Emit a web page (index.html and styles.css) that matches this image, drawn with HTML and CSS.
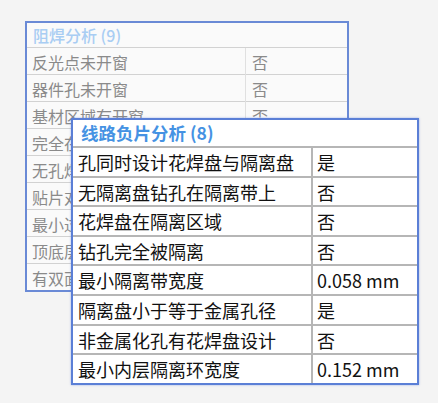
FILE: index.html
```html
<!DOCTYPE html>
<html lang="zh">
<head>
<meta charset="utf-8">
<link rel="stylesheet" href="styles.css">
</head>
<body>
<div class="stage">
  <div class="card back">
    <div class="head">阻焊分析 (9)</div>
    <div class="row"><div class="k">反光点未开窗</div><div class="v">否</div></div>
    <div class="row"><div class="k">器件孔未开窗</div><div class="v">否</div></div>
    <div class="row"><div class="k">基材区域有开窗</div><div class="v">否</div></div>
    <div class="row"><div class="k">完全在阻焊外</div><div class="v">否</div></div>
    <div class="row"><div class="k">无孔焊盘开窗</div><div class="v">否</div></div>
    <div class="row"><div class="k">贴片对应开窗</div><div class="v">否</div></div>
    <div class="row"><div class="k">最小过孔开窗</div><div class="v">否</div></div>
    <div class="row"><div class="k">顶底层开窗</div><div class="v">否</div></div>
    <div class="row"><div class="k">有双面开窗</div><div class="v">否</div></div>
  </div>
  <div class="card front">
    <div class="head">线路负片分析 (8)</div>
    <div class="row"><div class="k">孔同时设计花焊盘与隔离盘</div><div class="v">是</div></div>
    <div class="row"><div class="k">无隔离盘钻孔在隔离带上</div><div class="v">否</div></div>
    <div class="row"><div class="k">花焊盘在隔离区域</div><div class="v">否</div></div>
    <div class="row"><div class="k">钻孔完全被隔离</div><div class="v">否</div></div>
    <div class="row"><div class="k">最小隔离带宽度</div><div class="v">0.058 mm</div></div>
    <div class="row"><div class="k">隔离盘小于等于金属孔径</div><div class="v">是</div></div>
    <div class="row"><div class="k">非金属化孔有花焊盘设计</div><div class="v">否</div></div>
    <div class="row"><div class="k">最小内层隔离环宽度</div><div class="v">0.152 mm</div></div>
  </div>
</div>
</body>
</html>
```

FILE: styles.css
```css
html, body {
  margin: 0;
  padding: 0;
  background: #f4f4f4;
}
body {
  width: 438px;
  height: 403px;
  overflow: hidden;
  font-family: "Noto Sans CJK SC", "Noto Sans", sans-serif;
}
.stage {
  position: relative;
  padding: 21px 0 0 25px;
}
.card {
  box-sizing: border-box;
}
.back {
  width: 324px;
  border: 2px solid #6a8ad6;
  background: #fafafa;
  font-size: 16px;
  color: #8a8a8a;
}
.back .head {
  height: 24px;
  line-height: 24px;
  padding-left: 6px;
  color: #a9cdf3;
  font-weight: 500;
}
.back .row {
  display: grid;
  grid-template-columns: 219px 1fr;
  border-top: 1px solid #d2d2d2;
  height: 26px;
}
.back .k {
  border-right: 1px solid #e0e0e0;
  padding-left: 5px;
  line-height: 26px;
  padding-top: 1px;
  white-space: nowrap;
  overflow: hidden;
}
.back .v {
  padding-left: 6px;
  line-height: 26px;
  padding-top: 1px;
}
.front {
  position: absolute;
  left: 71px;
  top: 118px;
  width: 348px;
  border: 2px solid #5b7fd6;
  background: #ffffff;
  box-shadow: 0 0 2px rgba(80, 120, 220, 0.55);
  font-size: 18px;
  color: #111111;
}
.front .head {
  height: 26px;
  line-height: 26px;
  padding-left: 8px;
  font-size: 17.5px;
  font-weight: 700;
  color: #4592e3;
}
.front .row {
  display: grid;
  grid-template-columns: 240px 1fr;
  border-top: 2px solid #b6b6b6;
  height: 27.6px;
}
.front .k {
  border-right: 2px solid #b6b6b6;
  padding-left: 5px;
  line-height: 27px;
  padding-top: 1px;
  white-space: nowrap;
}
.front .v {
  padding-left: 4px;
  line-height: 27px;
  padding-top: 1px;
  white-space: nowrap;
}
```
